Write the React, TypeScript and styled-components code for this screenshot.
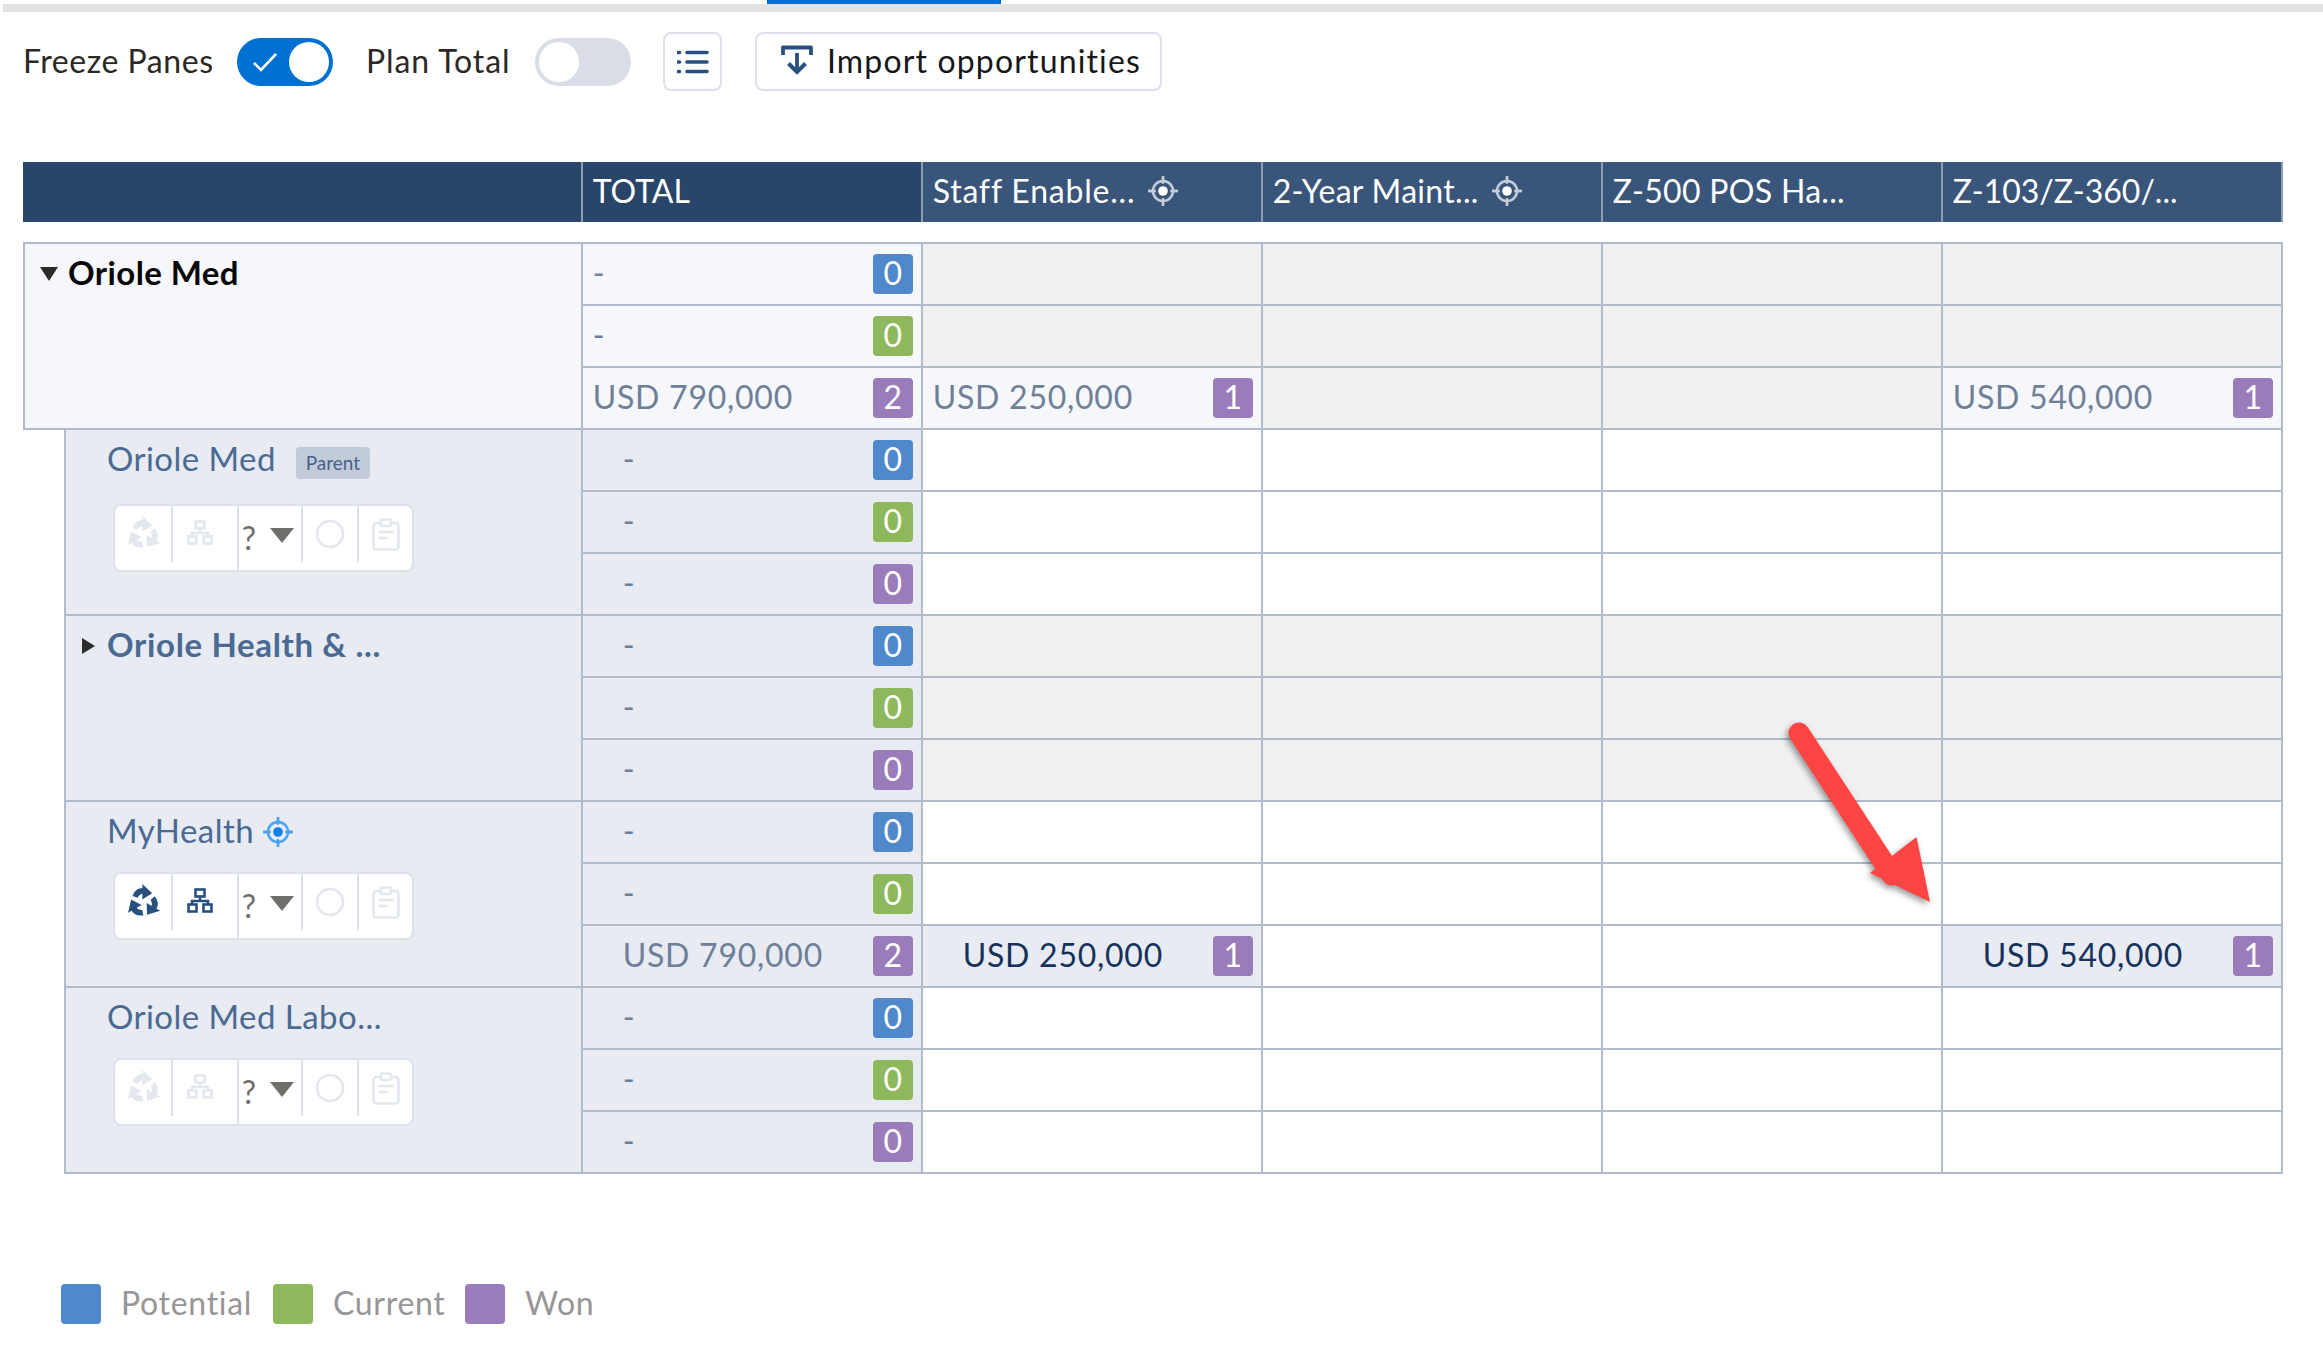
import React from 'react';
import styled, { createGlobalStyle } from 'styled-components';

const Global = createGlobalStyle`
  html, body { margin: 0; padding: 0; background: #fff; }
  body { font-family: Lato, "Open Sans", "Liberation Sans", sans-serif; font-size: 32px; }
  * { box-sizing: border-box; }
`;

const LINE = '#b0bccb';
const NAVY = '#28507c';
const OFF = '#e3e7ee';

const Page = styled.div`
  position: relative;
  width: 2323px;
  height: 1350px;
  overflow: hidden;
`;
const TabStrip = styled.div`
  height: 4px;
  padding-left: 767px;
`;
const ActiveTab = styled.div`
  width: 234px;
  height: 4px;
  background: #0070d2;
`;
const TabRail = styled.div`
  height: 8px;
  margin-left: 3px;
  background: #e2e2e2;
`;
const Toolbar = styled.div`
  display: flex;
  align-items: center;
  height: 59px;
  margin-top: 20px;
  padding-left: 23px;
`;
const ToolLabel = styled.span<{ $w: number; $track: number }>`
  width: ${p => p.$w}px;
  padding-bottom: 3px;
  font-size: 32px;
  color: #2b2826;
  letter-spacing: ${p => p.$track}px;
  white-space: nowrap;
`;
const Toggle = styled.div<{ $on?: boolean }>`
  display: flex;
  align-items: center;
  justify-content: ${p => (p.$on ? 'space-between' : 'flex-start')};
  width: 96px;
  height: 48px;
  margin-right: ${p => (p.$on ? 33 : 32)}px;
  padding: 4px;
  border-radius: 24px;
  background: ${p => (p.$on ? '#0070d2' : '#d8dde6')};
`;
const Knob = styled.div`
  width: 40px;
  height: 40px;
  border-radius: 50%;
  background: #fff;
`;
const CheckMark = styled.svg`
  width: 26px;
  height: 20px;
  margin-left: 11px;
`;
const IconButton = styled.button`
  display: flex;
  align-items: center;
  justify-content: center;
  width: 59px;
  height: 59px;
  margin-right: 33px;
  padding: 0;
  background: #fff;
  border: 2px solid #dde1ea;
  border-radius: 8px;
`;
const ImportButton = styled.button`
  display: flex;
  align-items: center;
  width: 407px;
  height: 59px;
  padding: 0 0 3px 24px;
  gap: 14px;
  background: #fff;
  border: 2px solid #dde1ea;
  border-radius: 8px;
  font: 400 32px Lato, sans-serif;
  letter-spacing: 1.15px;
  color: #16171a;
  white-space: nowrap;
`;

const HeaderRow = styled.div`
  display: grid;
  grid-template-columns: 559.7px repeat(5, 340px);
  width: fit-content;
  height: 60px;
  margin: 71px 0 20px 23px;
`;
const HeadCell = styled.div<{ $dark?: boolean }>`
  display: flex;
  align-items: center;
  gap: 13px;
  padding: 0 0 3px 10px;
  background: ${p => (p.$dark ? '#294569' : '#395579')};
  border-right: 2px solid #8a9db5;
  color: #fff;
  font-size: 32px;
  letter-spacing: 0.3px;
  white-space: nowrap;
`;
const HeadTitle = styled.span<{ $track?: number }>`
  letter-spacing: ${p => p.$track ?? 0.3}px;
`;

const Group = styled.div<{ $indent: number; $first?: boolean }>`
  display: grid;
  grid-template-columns: ${p => 559.7 - p.$indent}px repeat(5, 340px);
  grid-template-rows: repeat(3, 62px);
  width: fit-content;
  margin-left: ${p => 23 + p.$indent}px;
  ${p => (p.$first ? `border-top: 2px solid ${LINE};` : '')}
`;
const LabelCell = styled.div<{ $top?: boolean }>`
  grid-row: 1 / span 3;
  padding-top: 5px;
  background: ${p => (p.$top ? '#f5f7fb' : '#e8ebf1')};
  border-left: 2px solid ${LINE};
  border-right: 2px solid ${LINE};
  border-bottom: 2px solid ${LINE};
`;
const TitleRow = styled.div<{ $pad: number }>`
  display: flex;
  align-items: center;
  height: 50px;
  padding-left: ${p => p.$pad}px;
`;
const CaretDown = styled.span`
  width: 0;
  height: 0;
  margin: 0 10px 0 0;
  border-left: 9px solid transparent;
  border-right: 9px solid transparent;
  border-top: 14px solid #2b2b2b;
`;
const CaretRight = styled.span`
  width: 0;
  height: 0;
  margin-right: 12px;
  border-top: 8px solid transparent;
  border-bottom: 8px solid transparent;
  border-left: 13px solid #2b2b2b;
`;
const TopTitle = styled.span`
  padding-bottom: 4px;
  font-size: 33px;
  font-weight: 700;
  letter-spacing: 0.4px;
  color: #080707;
  white-space: nowrap;
`;
const SubTitle = styled.span<{ $bold?: boolean }>`
  padding-bottom: 4px;
  font-size: 33px;
  font-weight: ${p => (p.$bold ? 700 : 400)};
  letter-spacing: ${p => (p.$bold ? 0.65 : 0.45)}px;
  color: #4a6a94;
  white-space: nowrap;
`;
const ParentBadge = styled.span`
  display: flex;
  align-items: center;
  justify-content: center;
  width: 74px;
  height: 32px;
  margin: 5px 0 0 20px;
  border-radius: 4px;
  background: #c1cbd9;
  color: #48628a;
  font-size: 19px;
`;
const TitleIcon = styled.span`
  display: flex;
  margin-left: 9px;
`;
const ActionBar = styled.div<{ $gap: number }>`
  display: flex;
  width: 301px;
  height: 68px;
  margin: ${p => p.$gap}px 0 0 47px;
  background: #fff;
  border: 2px solid #dde1ea;
  border-radius: 8px;
`;
const ActionCell = styled.div<{ $w: number; $full?: boolean; $last?: boolean }>`
  display: flex;
  align-items: center;
  justify-content: center;
  width: ${p => p.$w}px;
  height: ${p => (p.$full ? '100%' : '56px')};
  ${p => (p.$full ? 'padding: 0 10px 12px 0;' : '')}
  ${p => (p.$last ? '' : 'border-right: 2px solid #dde1ea;')}
`;
const DropCell = styled(ActionCell)`
  padding-right: 4px;
`;
const Question = styled.span`
  margin: 8px 14px 0 0;
  font-size: 32px;
  color: #706e6b;
  line-height: 1;
`;
const ActionCaret = styled.span`
  width: 0;
  height: 0;
  margin-top: 3px;
  border-left: 12px solid transparent;
  border-right: 12px solid transparent;
  border-top: 15px solid #706e6b;
`;

type Fill = 'white' | 'grey' | 'soft' | 'sub';
const FILL: Record<Fill, string> = { white: '#fff', grey: '#f0f0f0', soft: '#f5f7fb', sub: '#e8ebf1' };
const Cell = styled.div<{ $fill: Fill; $inset: number }>`
  display: flex;
  align-items: center;
  padding: 0 8px 0 ${p => p.$inset}px;
  background: ${p => FILL[p.$fill]};
  border-right: 2px solid ${LINE};
  border-bottom: 2px solid ${LINE};
`;
const Amount = styled.span<{ $dark?: boolean }>`
  padding-bottom: 4px;
  font-size: 32px;
  letter-spacing: 0.75px;
  color: ${p => (p.$dark ? '#16325c' : '#6e8099')};
  white-space: nowrap;
`;
type Stage = 'blue' | 'green' | 'purple';
const STAGE: Record<Stage, string> = { blue: '#4f88cb', green: '#8db95c', purple: '#9b7cba' };
const Pill = styled.span<{ $stage: Stage }>`
  display: flex;
  align-items: center;
  justify-content: center;
  width: 40px;
  height: 40px;
  margin-left: auto;
  padding-bottom: 3px;
  border-radius: 4px;
  background: ${p => STAGE[p.$stage]};
  color: #fff;
  font-size: 32px;
`;

const Legend = styled.div`
  display: flex;
  align-items: center;
  height: 40px;
  margin: 110px 0 0 61px;
`;
const Swatch = styled.span<{ $stage: Stage }>`
  width: 40px;
  height: 40px;
  margin-right: 20px;
  border-radius: 4px;
  background: ${p => STAGE[p.$stage]};
`;
const LegendText = styled.span<{ $w: number }>`
  width: ${p => p.$w}px;
  padding-bottom: 3px;
  font-size: 32px;
  letter-spacing: 0.7px;
  color: #969696;
  white-space: nowrap;
`;
const ArrowOverlay = styled.svg`
  position: absolute;
  left: 1760px;
  top: 700px;
  width: 200px;
  height: 220px;
  filter: drop-shadow(-2px 3px 3px rgba(0, 0, 0, 0.4));
`;

const Target = ({ ring, dot, size = 30 }: { ring: string; dot: string; size?: number }) => (
  <svg width={size} height={size} viewBox="0 0 30 30">
    <circle cx="15" cy="15" r="10" fill="none" stroke={ring} strokeWidth="2.6" />
    <path d="M15 1v5.500M15 23.500v5.500M1 15h5.500M23.500 15h5.500" stroke={ring} strokeWidth="2.8" strokeLinecap="round" />
    <circle cx="15" cy="15" r="4.800" fill={dot} />
  </svg>
);
const Recycle = ({ color }: { color: string }) => (
  <svg width="37" height="37" viewBox="0 0 32 32">
    {[0, 120, 240].map(a => (
      <g key={a} transform={`rotate(${a} 16 16)`}>
        <path d="M6.600 10.400C8 6 11 3.500 15.500 3.500L15.500 8.500C13.500 8.500 12 10 11 11.800Z" fill={color} />
        <path d="M15 0L23.500 8L15 13.500Z" fill={color} />
      </g>
    ))}
  </svg>
);
const Hierarchy = ({ color }: { color: string }) => (
  <svg width="26" height="25" viewBox="0 0 26 25" fill="none" stroke={color} strokeWidth="2.6">
    <rect x="8.500" y="1.500" width="9" height="7" />
    <path d="M13 8.500V13M5 17V13H21V17" />
    <rect x="1.500" y="16.500" width="8" height="7" />
    <rect x="16.500" y="16.500" width="8" height="7" />
  </svg>
);
const Ring = () => (
  <svg width="30" height="30" viewBox="0 0 30 30">
    <circle cx="15" cy="15" r="13" fill="none" stroke={OFF} strokeWidth="2.600" />
  </svg>
);
const Clipboard = () => (
  <svg width="28" height="33" viewBox="0 0 28 33" fill="none" stroke={OFF} strokeWidth="2.600" strokeLinecap="round">
    <rect x="1.500" y="5" width="25" height="26.500" rx="3" />
    <path d="M9 5V3.500C9 2 10 1.500 11 1.500H17C18 1.500 19 2 19 3.500V5C19 7 18 8 17 8H11C10 8 9 7 9 5Z" fill="#fff" />
    <path d="M7.500 14H20.500M7.500 20H15" />
  </svg>
);
const Actions = ({ active, gap }: { active?: boolean; gap: number }) => (
  <ActionBar $gap={gap}>
    <ActionCell $w={58}><Recycle color={active ? NAVY : OFF} /></ActionCell>
    <ActionCell $w={66} $full><Hierarchy color={active ? NAVY : OFF} /></ActionCell>
    <DropCell $w={64}><Question>?</Question><ActionCaret /></DropCell>
    <ActionCell $w={56}><Ring /></ActionCell>
    <ActionCell $w={53} $last><Clipboard /></ActionCell>
  </ActionBar>
);

type Col = { fill: Fill; text?: string; n?: string };
type Row = { stage: Stage; total: string; n: string; cols: Col[] };
const blank = (fill: Fill): Col[] => [{ fill }, { fill }, { fill }, { fill }];
const dashRows = (fill: Fill): Row[] => [
  { stage: 'blue', total: '-', n: '0', cols: blank(fill) },
  { stage: 'green', total: '-', n: '0', cols: blank(fill) },
  { stage: 'purple', total: '-', n: '0', cols: blank(fill) },
];
const topRows: Row[] = [
  ...dashRows('grey').slice(0, 2),
  {
    stage: 'purple', total: 'USD 790,000', n: '2',
    cols: [{ fill: 'soft', text: 'USD 250,000', n: '1' }, { fill: 'grey' }, { fill: 'grey' }, { fill: 'soft', text: 'USD 540,000', n: '1' }],
  },
];
const healthRows: Row[] = [
  ...dashRows('white').slice(0, 2),
  {
    stage: 'purple', total: 'USD 790,000', n: '2',
    cols: [{ fill: 'sub', text: 'USD 250,000', n: '1' }, { fill: 'white' }, { fill: 'white' }, { fill: 'sub', text: 'USD 540,000', n: '1' }],
  },
];

const Rows = ({ rows, top }: { rows: Row[]; top?: boolean }) => (
  <>
    {rows.map((r, i) => (
      <React.Fragment key={i}>
        <Cell $fill={top ? 'soft' : 'sub'} $inset={top ? 10 : 40}>
          <Amount>{r.total}</Amount>
          <Pill $stage={r.stage}>{r.n}</Pill>
        </Cell>
        {r.cols.map((c, j) => (
          <Cell key={j} $fill={c.fill} $inset={top ? 10 : 40}>
            {c.text && <Amount $dark={!top}>{c.text}</Amount>}
            {c.n && <Pill $stage="purple">{c.n}</Pill>}
          </Cell>
        ))}
      </React.Fragment>
    ))}
  </>
);

export default function App() {
  return (
    <Page>
      <Global />
      <TabStrip><ActiveTab /></TabStrip>
      <TabRail />
      <Toolbar>
        <ToolLabel $w={214} $track={0.55}>Freeze Panes</ToolLabel>
        <Toggle $on>
          <CheckMark viewBox="0 0 26 20"><path d="M2 11l7 7L24 2" fill="none" stroke="#fff" strokeWidth="2.6" /></CheckMark>
          <Knob />
        </Toggle>
        <ToolLabel $w={169} $track={0.9}>Plan Total</ToolLabel>
        <Toggle><Knob /></Toggle>
        <IconButton>
          <svg width="32" height="24" viewBox="0 0 32 24" fill="none" stroke={NAVY} strokeWidth="3.6" strokeLinecap="round">
            <path d="M1.500 2.500h1M10 2.500h20M1.500 12h1M10 12h20M1.500 21.500h1M10 21.500h20" />
          </svg>
        </IconButton>
        <ImportButton>
          <svg width="32" height="31" viewBox="0 0 32 31" fill="none" stroke={NAVY} strokeWidth="3.800">
            <path d="M2 10V2.500H30V10" strokeLinejoin="round" />
            <path d="M16 8V26" />
            <path d="M7.500 18.500L16 27L24.500 18.500" strokeWidth="4" />
          </svg>
          Import opportunities
        </ImportButton>
      </Toolbar>

      <HeaderRow>
        <HeadCell $dark />
        <HeadCell $dark><HeadTitle $track={0}>TOTAL</HeadTitle></HeadCell>
        <HeadCell><HeadTitle $track={0.8}>Staff Enable...</HeadTitle><Target ring="#c3ccd8" dot="#fff" /></HeadCell>
        <HeadCell><HeadTitle>2-Year Maint...</HeadTitle><Target ring="#c3ccd8" dot="#fff" /></HeadCell>
        <HeadCell><HeadTitle>Z-500 POS Ha...</HeadTitle></HeadCell>
        <HeadCell><HeadTitle $track={0}>Z-103/Z-360/...</HeadTitle></HeadCell>
      </HeaderRow>

      <Group $indent={0} $first>
        <LabelCell $top>
          <TitleRow $pad={15}><CaretDown /><TopTitle>Oriole Med</TopTitle></TitleRow>
        </LabelCell>
        <Rows rows={topRows} top />
      </Group>
      <Group $indent={41}>
        <LabelCell>
          <TitleRow $pad={41}><SubTitle>Oriole Med</SubTitle><ParentBadge>Parent</ParentBadge></TitleRow>
          <Actions gap={19} />
        </LabelCell>
        <Rows rows={dashRows('white')} />
      </Group>
      <Group $indent={41}>
        <LabelCell>
          <TitleRow $pad={16}><CaretRight /><SubTitle $bold>Oriole Health &amp; ...</SubTitle></TitleRow>
        </LabelCell>
        <Rows rows={dashRows('grey')} />
      </Group>
      <Group $indent={41}>
        <LabelCell>
          <TitleRow $pad={41}><SubTitle>MyHealth</SubTitle><TitleIcon><Target ring="#4aa3f5" dot="#0f7fe8" /></TitleIcon></TitleRow>
          <Actions active gap={15} />
        </LabelCell>
        <Rows rows={healthRows} />
      </Group>
      <Group $indent={41}>
        <LabelCell>
          <TitleRow $pad={41}><SubTitle>Oriole Med Labo...</SubTitle></TitleRow>
          <Actions gap={15} />
        </LabelCell>
        <Rows rows={dashRows('white')} />
      </Group>

      <Legend>
        <Swatch $stage="blue" /><LegendText $w={152}>Potential</LegendText>
        <Swatch $stage="green" /><LegendText $w={132}>Current</LegendText>
        <Swatch $stage="purple" /><LegendText $w={70}>Won</LegendText>
      </Legend>

      <ArrowOverlay viewBox="0 0 200 220">
        <path d="M39 33L132 175" stroke="#ff4444" strokeWidth="21" strokeLinecap="round" fill="none" />
        <path d="M156.500 137L170 202L110 173Z" fill="#ff4444" />
      </ArrowOverlay>
    </Page>
  );
}
